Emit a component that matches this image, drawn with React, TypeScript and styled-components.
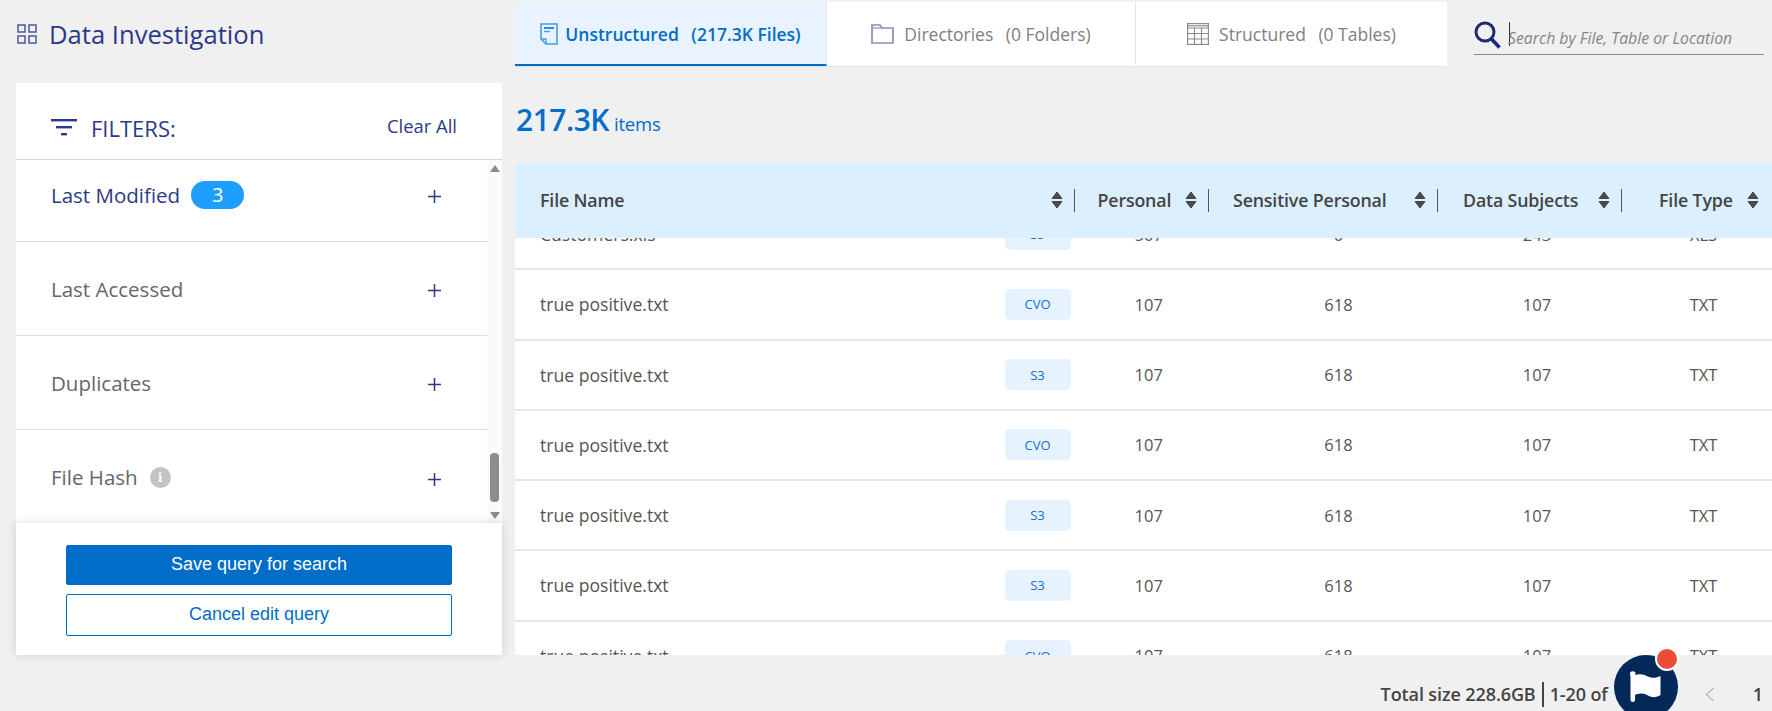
import React from 'react';
import styled, { createGlobalStyle } from 'styled-components';

const GlobalStyle = createGlobalStyle`
  html, body {
    margin: 0;
    padding: 0;
    background: #f0f0f0;
    overflow: hidden;
  }
  * {
    box-sizing: border-box;
  }
`;

const navy = '#2b3a8a';
const blue = '#006dc9';
const font = `"Open Sans", "Noto Sans", sans-serif`;

const Page = styled.div`
  width: 1772px;
  height: 711px;
  overflow: hidden;
  font-family: ${font};
  background: #f0f0f0;
`;

const TopBar = styled.header`
  display: flex;
  height: 66px;
  margin-top: 2px;
  padding-top: 0;
`;

const PageTitle = styled.div`
  width: 515px;
  padding-left: 17px;
  display: flex;
  align-items: center;
  gap: 12px;
  height: 64px;
  font-size: 25.6px;
  color: ${navy};
`;

const Tabs = styled.nav`
  display: grid;
  grid-template-columns: 312px 309px 311px;
  width: 932px;
  height: 64px;
  background: #fff;
  border-radius: 0 2px 2px 0;
  box-shadow: 0 1px 1px rgba(0, 0, 0, 0.06);
`;

const Tab = styled.div<{ $active?: boolean; $last?: boolean }>`
  display: flex;
  align-items: center;
  justify-content: center;
  gap: ${(p) => (p.$active ? '7px' : '10px')};
  padding-top: 1px;
  font-size: 17.5px;
  font-weight: ${(p) => (p.$active ? 600 : 400)};
  color: ${(p) => (p.$active ? blue : '#808080')};
  background: ${(p) => (p.$active ? '#e9f3ff' : '#fff')};
  border-bottom: 2px solid ${(p) => (p.$active ? blue : 'transparent')};
  border-right: ${(p) => (p.$last ? 'none' : '1px solid #e4e4e4')};
`;

const TabCount = styled.span`
  margin-left: 8px;
`;

const SearchBox = styled.div`
  margin-left: 27px;
  width: 290px;
  height: 53px;
  padding-top: 19px;
  display: flex;
  align-items: flex-start;
  border-bottom: 1px solid #8a8a8a;
`;

const Caret = styled.span`
  width: 1px;
  height: 24px;
  margin: 1px 0 0 8px;
  background: #333;
`;

const SearchInput = styled.input`
  flex: 1;
  min-width: 0;
  margin-left: -2px;
  border: none;
  outline: none;
  background: transparent;
  padding: 3px 0 0;
  height: 30px;
  font-family: ${font};
  font-size: 15.8px;
  font-style: italic;

  &::placeholder {
    color: #858585;
    opacity: 1;
  }
`;

const Main = styled.main`
  display: flex;
  margin-top: 15px;
  height: 572px;
`;

const Sidebar = styled.aside`
  width: 486px;
  margin-left: 16px;
  display: flex;
  flex-direction: column;
  background: #fff;
`;

const SidebarHeader = styled.div`
  height: 77px;
  flex: none;
  display: flex;
  align-items: center;
  padding: 29px 45px 16px 35px;
  border-bottom: 1px solid #d6d6d6;
`;

const FiltersLabel = styled.span`
  margin-left: 14px;
  font-size: 22px;
  color: ${navy};
  flex: 1;
`;

const ClearAll = styled.button`
  border: none;
  background: none;
  padding: 0;
  font-family: ${font};
  font-size: 18.4px;
  color: ${navy};
  margin-bottom: 4px;
`;

const FilterViewport = styled.div`
  flex: 1;
  min-height: 0;
  display: flex;
`;

const FilterList = styled.div`
  flex: 1;
  overflow: hidden;
`;

const FilterScroll = styled.div`
  margin-top: -12px;
`;

const FilterRow = styled.div`
  height: 94px;
  display: flex;
  align-items: center;
  padding: 0 46px 0 35px;
  border-bottom: 1px solid #dedede;

  &:last-child {
    border-bottom: none;
  }
`;

const FilterName = styled.span<{ $on?: boolean }>`
  font-size: 20.5px;
  color: ${(p) => (p.$on ? navy : '#666')};
`;

const CountBadge = styled.span`
  margin-left: 11px;
  width: 53px;
  height: 28px;
  border-radius: 14px;
  background: #1e9fff;
  color: #fff;
  font-size: 20px;
  display: flex;
  align-items: center;
  justify-content: center;
`;

const InfoDot = styled.span`
  margin-left: 12px;
  width: 21px;
  height: 21px;
  border-radius: 50%;
  background: #c4c4c4;
  color: #fff;
  font-family: "Liberation Serif", serif;
  font-weight: 700;
  font-size: 15px;
  display: flex;
  align-items: center;
  justify-content: center;
`;

const PlusWrap = styled.span`
  margin-left: auto;
  margin-top: 4px;
  display: flex;
  color: ${navy};
`;

const ScrollTrack = styled.div`
  width: 15px;
  flex: none;
  background: #fafafa;
  display: flex;
  flex-direction: column;
  align-items: center;
  padding: 5px 0 4px;
`;

const ArrowUp = styled.span`
  width: 0;
  height: 0;
  border-left: 5px solid transparent;
  border-right: 5px solid transparent;
  border-bottom: 7px solid #8a8a8a;
`;

const ArrowDown = styled.span`
  width: 0;
  height: 0;
  margin-top: 10px;
  border-left: 5px solid transparent;
  border-right: 5px solid transparent;
  border-top: 7px solid #8a8a8a;
`;

const ScrollThumb = styled.span`
  margin-top: auto;
  width: 9px;
  height: 49px;
  border-radius: 4px;
  background: #8c8c8c;
`;

const SidebarActions = styled.div`
  height: 132px;
  flex: none;
  position: relative;
  padding: 22px 50px 0;
  display: flex;
  flex-direction: column;
  gap: 9px;
  background: #fff;
  box-shadow: 0 0 9px rgba(0, 0, 0, 0.14);
`;

const ActionButton = styled.button<{ $primary?: boolean }>`
  height: ${(p) => (p.$primary ? '40px' : '42px')};
  border-radius: 2px;
  border: 1px solid ${blue};
  background: ${(p) => (p.$primary ? blue : '#fff')};
  color: ${(p) => (p.$primary ? '#fff' : blue)};
  font-family: "Liberation Sans", Arial, sans-serif;
  font-size: 18px;
  padding: 0 0 1px;
`;

const Content = styled.section`
  margin-left: 13px;
  width: 1257px;
  display: flex;
  flex-direction: column;
`;

const Summary = styled.div`
  height: 80px;
  flex: none;
  display: flex;
  align-items: baseline;
  padding: 16px 0 0 1px;
  color: ${blue};
`;

const SummaryCount = styled.span`
  font-size: 30px;
  font-weight: 600;
  letter-spacing: -0.5px;
`;

const SummaryUnit = styled.span`
  margin-left: 5px;
  font-size: 18.5px;
  letter-spacing: -0.2px;
`;

const columns = '559.5px 134.5px 229px 184px 150px';

const TableHead = styled.div`
  height: 75px;
  flex: none;
  display: grid;
  grid-template-columns: ${columns};
  background: #dcefff;
`;

const HeadCell = styled.div<{ $pad: number; $end: number }>`
  display: flex;
  align-items: center;
  padding: 0 ${(p) => p.$end}px 1px ${(p) => p.$pad}px;
  font-size: 17.8px;
  font-weight: 600;
  letter-spacing: -0.15px;
  color: #454545;
  white-space: nowrap;
`;

const SortSvg = styled.svg`
  margin-left: auto;
  flex: none;
`;

const HeadSep = styled.span`
  width: 1px;
  height: 23px;
  margin-left: 11px;
  background: #555;
  flex: none;
`;

const TableBody = styled.div`
  flex: 1;
  min-height: 0;
  overflow: hidden;
  background: #fff;
`;

const BodyScroll = styled.div`
  margin-top: -38px;
`;

const Row = styled.div`
  height: 70.25px;
  display: grid;
  grid-template-columns: ${columns};
  align-items: center;
  border-bottom: 2px solid #e6e6e6;
  font-size: 16.5px;
  color: #555;
`;

const NameCell = styled.div`
  display: flex;
  align-items: center;
  justify-content: space-between;
  padding: 0 4px 0 25px;
  font-size: 17.6px;
`;

const SourceTag = styled.span`
  width: 66px;
  height: 31px;
  border-radius: 5px;
  background: #e6f3fe;
  color: #0e72cc;
  font-size: 13px;
  display: flex;
  align-items: center;
  justify-content: center;
`;

const NumCell = styled.div<{ $pad: number }>`
  text-align: center;
  padding-left: ${(p) => p.$pad}px;
`;

const PageFooter = styled.footer`
  position: relative;
  height: 56px;
  display: flex;
  align-items: center;
  justify-content: flex-end;
  padding: 22px 9px 0 0;
  font-size: 18px;
  font-weight: 600;
  letter-spacing: -0.1px;
  color: #444;
`;

const FooterSep = styled.span`
  width: 2px;
  height: 25px;
  margin: 0 6px;
  background: #444;
`;

const PrevPage = styled.span`
  display: flex;
  margin: 0 38px 0 97px;
`;

const FlagFab = styled.div`
  position: absolute;
  left: 1614px;
  top: 0;
  width: 64px;
  height: 64px;
  border-radius: 50%;
  background: #032859;
  display: flex;
  align-items: center;
  justify-content: center;
`;

const FabDot = styled.span`
  position: absolute;
  left: 41px;
  top: -8px;
  width: 24px;
  height: 24px;
  border-radius: 50%;
  background: #ea4c36;
  border: 2px solid #fff;
`;

const GridIcon = () => (
  <svg width="20" height="20" viewBox="0 0 20 20" fill="none" stroke="#5562a6" strokeWidth="1.6">
    <rect x="1" y="1" width="7" height="7" />
    <rect x="12" y="1" width="7" height="7" />
    <rect x="1" y="12" width="7" height="7" />
    <rect x="12" y="12" width="7" height="7" />
  </svg>
);

const DocIcon = () => (
  <svg width="18" height="22" viewBox="0 0 18 22" fill="none">
    <path d="M1 1h16v20H6l-5-5z" stroke="#4a9be0" strokeWidth="1.6" />
    <path d="M1 16h5v5" stroke="#4a9be0" strokeWidth="1.4" />
    <path d="M4 5h10" stroke={blue} strokeWidth="1.6" />
    <path d="M4 8.5h6" stroke="#4a9be0" strokeWidth="1.4" />
  </svg>
);

const FolderIcon = () => (
  <svg width="23" height="21" viewBox="0 0 23 21" fill="none" stroke="#8a8fbc" strokeWidth="1.7">
    <path d="M1 20V2h8l2 3h11v15z" />
    <path d="M1 5h10" strokeWidth="1.2" />
  </svg>
);

const TableIcon = () => (
  <svg width="22" height="22" viewBox="0 0 22 22" fill="none" stroke="#8c8c8c" strokeWidth="1.2">
    <rect x="0.6" y="0.6" width="20.8" height="20.8" />
    <path d="M0.6 5h20.8M0.6 10.5h20.8M0.6 16h20.8M7.5 5v16.4M14.5 5v16.4" />
    <path d="M0.6 2.8h20.8" />
  </svg>
);

const SearchIcon = () => (
  <svg width="27" height="28" viewBox="0 0 27 28" fill="none" stroke="#1c2b78" style={{ flex: 'none' }}>
    <circle cx="11" cy="11" r="9" strokeWidth="3" />
    <path d="M17.5 18l8 8.5" strokeWidth="3.6" />
  </svg>
);

const FilterIcon = () => (
  <svg width="26" height="17" viewBox="0 0 26 17" fill={navy}>
    <rect x="0" y="0" width="26" height="2.4" />
    <rect x="5" y="7" width="16" height="2.4" />
    <rect x="10" y="14" width="6" height="2.4" />
  </svg>
);

const PlusIcon = () => (
  <svg width="13" height="13" viewBox="0 0 13 13" stroke="currentColor" strokeWidth="1.5">
    <path d="M0 6.5h13M6.5 0v13" />
  </svg>
);

const SortIcon = () => (
  <SortSvg width="12" height="18" viewBox="0 0 12 18" fill="#4a4a4a" stroke="#4a4a4a" strokeWidth="1" strokeLinejoin="round">
    <path d="M6 1L11 7.5H1z" />
    <path d="M6 17L11 10.5H1z" />
  </SortSvg>
);

const ChevronLeft = () => (
  <svg width="10" height="15" viewBox="0 0 10 15" fill="none" stroke="#bdbdbd" strokeWidth="1.6">
    <path d="M8.5 1L1.5 7.5l7 6.5" />
  </svg>
);

const FlagIcon = () => (
  <svg width="32" height="32" viewBox="0 0 32 32" fill="#fff">
    <circle cx="2.8" cy="3" r="2.8" />
    <rect x="0.500" y="3" width="4.6" height="28" rx="2.2" />
    <path d="M3 5C9 2 14 3 18 5.5c4 2 8 1.500 12.500-.5v19c-4 2.500-8 3-12.500 .5-4-2.500-9-3-15 .5z" />
  </svg>
);

const filters = [
  { name: 'Last Modified', on: true, count: 3 },
  { name: 'Last Accessed' },
  { name: 'Duplicates' },
  { name: 'File Hash', info: true },
];

const headers = [
  { label: 'File Name', pad: 25, end: 0, sep: true },
  { label: 'Personal', pad: 23, end: 0, sep: true },
  { label: 'Sensitive Personal', pad: 24, end: 0, sep: true },
  { label: 'Data Subjects', pad: 25, end: 0, sep: true },
  { label: 'File Type', pad: 37, end: 13, sep: false },
];

const rows = [
  { name: 'Customers.xls', tag: 'S3', personal: 507, sensitive: 0, subjects: 243, type: 'XLS' },
  { name: 'true positive.txt', tag: 'CVO', personal: 107, sensitive: 618, subjects: 107, type: 'TXT' },
  { name: 'true positive.txt', tag: 'S3', personal: 107, sensitive: 618, subjects: 107, type: 'TXT' },
  { name: 'true positive.txt', tag: 'CVO', personal: 107, sensitive: 618, subjects: 107, type: 'TXT' },
  { name: 'true positive.txt', tag: 'S3', personal: 107, sensitive: 618, subjects: 107, type: 'TXT' },
  { name: 'true positive.txt', tag: 'S3', personal: 107, sensitive: 618, subjects: 107, type: 'TXT' },
  { name: 'true positive.txt', tag: 'CVO', personal: 107, sensitive: 618, subjects: 107, type: 'TXT' },
];

export default function App() {
  return (
    <Page>
      <GlobalStyle />
      <TopBar>
        <PageTitle>
          <GridIcon />
          Data Investigation
        </PageTitle>
        <Tabs>
          <Tab $active>
            <DocIcon />
            <span>
              Unstructured<TabCount> (217.3K Files)</TabCount>
            </span>
          </Tab>
          <Tab>
            <FolderIcon />
            <span>
              Directories<TabCount> (0 Folders)</TabCount>
            </span>
          </Tab>
          <Tab $last>
            <TableIcon />
            <span>
              Structured<TabCount> (0 Tables)</TabCount>
            </span>
          </Tab>
        </Tabs>
        <SearchBox>
          <SearchIcon />
          <Caret />
          <SearchInput placeholder="Search by File, Table or Location" />
        </SearchBox>
      </TopBar>

      <Main>
        <Sidebar>
          <SidebarHeader>
            <FilterIcon />
            <FiltersLabel>FILTERS:</FiltersLabel>
            <ClearAll>Clear All</ClearAll>
          </SidebarHeader>
          <FilterViewport>
            <FilterList>
              <FilterScroll>
                {filters.map((f) => (
                  <FilterRow key={f.name}>
                    <FilterName $on={f.on}>{f.name}</FilterName>
                    {f.count && <CountBadge>{f.count}</CountBadge>}
                    {f.info && <InfoDot>i</InfoDot>}
                    <PlusWrap>
                      <PlusIcon />
                    </PlusWrap>
                  </FilterRow>
                ))}
              </FilterScroll>
            </FilterList>
            <ScrollTrack>
              <ArrowUp />
              <ScrollThumb />
              <ArrowDown />
            </ScrollTrack>
          </FilterViewport>
          <SidebarActions>
            <ActionButton $primary>Save query for search</ActionButton>
            <ActionButton>Cancel edit query</ActionButton>
          </SidebarActions>
        </Sidebar>

        <Content>
          <Summary>
            <SummaryCount>217.3K</SummaryCount>
            <SummaryUnit>items</SummaryUnit>
          </Summary>
          <TableHead>
            {headers.map((h) => (
              <HeadCell key={h.label} $pad={h.pad} $end={h.end}>
                {h.label}
                <SortIcon />
                {h.sep && <HeadSep />}
              </HeadCell>
            ))}
          </TableHead>
          <TableBody>
            <BodyScroll>
              {rows.map((r, i) => (
                <Row key={i}>
                  <NameCell>
                    {r.name}
                    <SourceTag>{r.tag}</SourceTag>
                  </NameCell>
                  <NumCell $pad={14}>{r.personal}</NumCell>
                  <NumCell $pad={30}>{r.sensitive}</NumCell>
                  <NumCell $pad={14}>{r.subjects}</NumCell>
                  <NumCell $pad={13}>{r.type}</NumCell>
                </Row>
              ))}
            </BodyScroll>
          </TableBody>
        </Content>
      </Main>

      <PageFooter>
        Total size 228.6GB
        <FooterSep />
        1-20 of
        <PrevPage>
          <ChevronLeft />
        </PrevPage>
        1
        <FlagFab>
          <FlagIcon />
          <FabDot />
        </FlagFab>
      </PageFooter>
    </Page>
  );
}
